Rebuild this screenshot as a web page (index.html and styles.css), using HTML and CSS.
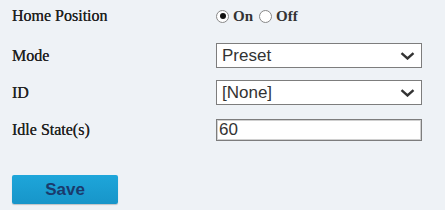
FILE: index.html
```html
<!DOCTYPE html>
<html lang="en">
<head>
  <meta charset="UTF-8" />
  <title>Home Position</title>
  <link rel="stylesheet" href="styles.css">
</head>
<body>
  <div id="home-form">
    <div class="row row-first">
      <span class="label">Home Position</span>
      <div class="radios">
        <label class="radio"><span class="dot checked"></span>On</label>
        <label class="radio"><span class="dot"></span>Off</label>
      </div>
    </div>
    <div class="row">
      <span class="label">Mode</span>
      <div class="select-wrap">
        <select class="field">
          <option>Preset</option>
        </select>
        <svg class="chevron" width="15" height="8" viewBox="0 0 15 8"><path d="M1.5 1.2 L7.5 6.5 L13.5 1.2" fill="none" stroke="#333" stroke-width="2.4"/></svg>
      </div>
    </div>
    <div class="row">
      <span class="label">ID</span>
      <div class="select-wrap">
        <select class="field">
          <option>[None]</option>
        </select>
        <svg class="chevron" width="15" height="8" viewBox="0 0 15 8"><path d="M1.5 1.2 L7.5 6.5 L13.5 1.2" fill="none" stroke="#333" stroke-width="2.4"/></svg>
      </div>
    </div>
    <div class="row">
      <span class="label">Idle State(s)</span>
      <input class="field text-field" type="text" value="60" />
    </div>
    <button class="save-btn">Save</button>
  </div>
</body>
</html>
```
FILE: styles.css
```css
body {
  margin: 0;
  background: #eef2f6;
  width: 445px;
  height: 210px;
  overflow: hidden;
}
#home-form {
  padding-left: 12px;
}
.row {
  display: flex;
  align-items: center;
  height: 37px;
}
.row-first {
  padding-bottom: 5px;
  height: 32px;
}
.label {
  width: 204px;
  font-family: "Liberation Serif", serif;
  font-size: 16px;
  color: #222;
  text-shadow: 0 0 0.5px #222;
}
.radios {
  display: flex;
  align-items: center;
}
.radio {
  display: flex;
  align-items: center;
  font-family: "Liberation Serif", serif;
  font-size: 15px;
  font-weight: bold;
  color: #333;
  margin-right: 6px;
}
.dot {
  width: 11px;
  height: 11px;
  border: 1px solid #888;
  border-radius: 50%;
  background: #fff;
  margin-right: 4px;
  position: relative;
}
.dot.checked::after {
  content: "";
  position: absolute;
  left: 2.5px;
  top: 2.5px;
  width: 6px;
  height: 6px;
  border-radius: 50%;
  background: #111;
}
.select-wrap {
  position: relative;
}
.field {
  box-sizing: border-box;
  width: 206px;
  height: 25px;
  border: 1px solid #7d7d7d;
  background: #fff;
  font-family: "Liberation Sans", Arial, sans-serif;
  font-size: 17px;
  color: #333;
  padding: 0 0 0 5px;
  margin: 0;
  outline: none;
  border-radius: 0;
  appearance: none;
  -webkit-appearance: none;
}
.chevron {
  position: absolute;
  right: 7px;
  top: 9px;
  pointer-events: none;
}
.text-field {
  height: 22px;
  padding-left: 2px;
  box-shadow: inset 0 0 0 1px #d0d0d0;
}
.save-btn {
  margin-top: 27px;
  width: 106px;
  height: 29px;
  border: none;
  border-radius: 2px;
  background: linear-gradient(#1ea6da, #1795c9);
  box-shadow: 0 1px 1px rgba(0, 0, 0, 0.2);
  font-family: "Liberation Sans", Arial, sans-serif;
  font-size: 17px;
  font-weight: bold;
  color: #1a3a6c;
  cursor: pointer;
}
```
